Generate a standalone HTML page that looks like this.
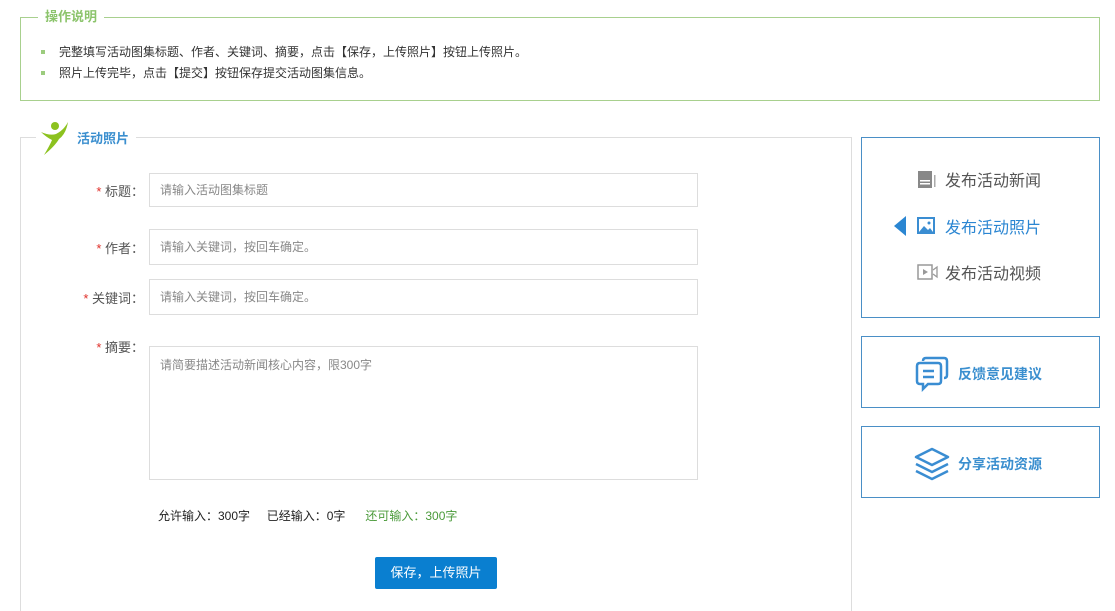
<!DOCTYPE html>
<html style="overflow:hidden;height:611px"><head><meta charset="utf-8"><style>
body{margin:0;width:1115px;height:611px;overflow:hidden;background:#fff;font-family:"Liberation Sans","Noto Sans CJK SC",sans-serif;position:relative;color:#333}
.a{position:absolute}
.lbl{position:absolute;width:126px;left:18px;text-align:right;font-size:13px;color:#555}
.lbl b{color:#e0302a;font-weight:normal}
.inp{position:absolute;left:149px;width:549px;border:1px solid #ddd;font-size:12px;color:#888;box-sizing:border-box;padding-left:10px}
.rb{position:absolute;left:861px;width:239px;border:1px solid #4a8fc6;box-sizing:border-box}
.it{position:absolute;left:945px;font-size:16px;color:#555}
</style></head><body>
<div class="a" style="left:20px;top:17px;width:1080px;height:84px;border:1px solid #a8d08e;box-sizing:border-box"></div>
<div class="a" style="left:38px;top:8px;background:#fff;padding:0 7px;font-size:13px;font-weight:bold;color:#8cc46c;line-height:18px">操作说明</div>
<div class="a" style="left:41px;top:50px;width:4px;height:4px;background:#9ccc7e"></div>
<div class="a" style="left:41px;top:71px;width:4px;height:4px;background:#9ccc7e"></div>
<div class="a" style="left:59px;top:44px;font-size:12px;line-height:16px;color:#333">完整填写活动图集标题、作者、关键词、摘要，点击【保存，上传照片】按钮上传照片。</div>
<div class="a" style="left:59px;top:65px;font-size:12px;line-height:16px;color:#333">照片上传完毕，点击【提交】按钮保存提交活动图集信息。</div>

<div class="a" style="left:20px;top:137px;width:832px;height:480px;border:1px solid #ddd;box-sizing:border-box"></div>
<div class="a" style="left:36px;top:118px;width:100px;height:40px;background:#fff"></div>
<svg class="a" style="left:40px;top:120px" width="32" height="36" viewBox="0 0 32 36">
<circle cx="15" cy="6" r="4" fill="#8cc21f"/>
<path d="M1 12 Q10 16 16 14 Q24 10 28 2 Q26 14 19 19 Q15 26 4 35 Q10 25 12 20 Q6 17 1 12Z" fill="#8cc21f"/>
</svg>
<div class="a" style="left:77px;top:128px;font-size:13px;font-weight:bold;color:#3b8fcf">活动照片</div>

<div class="lbl" style="top:181px"><b>*</b> 标题：</div>
<div class="inp" style="top:173px;height:34px;line-height:32px">请输入活动图集标题</div>
<div class="lbl" style="top:238px"><b>*</b> 作者：</div>
<div class="inp" style="top:229px;height:36px;line-height:34px">请输入关键词，按回车确定。</div>
<div class="lbl" style="top:288px"><b>*</b> 关键词：</div>
<div class="inp" style="top:279px;height:36px;line-height:34px">请输入关键词，按回车确定。</div>
<div class="lbl" style="top:337px"><b>*</b> 摘要：</div>
<div class="inp" style="top:346px;height:134px;padding-top:10px;line-height:16px">请简要描述活动新闻核心内容，限300字</div>
<div class="a" style="left:158px;top:507px;font-size:12px;color:#222">允许输入：300字&nbsp;&nbsp;&nbsp;&nbsp; 已经输入：0字&nbsp;&nbsp;&nbsp;&nbsp;&nbsp; <span style="color:#4a9a3a">还可输入：300字</span></div>
<div class="a" style="left:375px;top:557px;width:122px;height:32px;background:#0a7fd0;border-radius:2px;color:#fff;font-size:13px;text-align:center;line-height:32px">保存，上传照片</div>

<div class="rb" style="top:137px;height:181px"></div>
<svg class="a" style="left:917px;top:171px" width="20" height="18"><rect x="1" y="0" width="14" height="17" fill="#888"/><rect x="3" y="9" width="10" height="1.5" fill="#fff"/><rect x="3" y="12" width="10" height="1.5" fill="#fff"/><rect x="17" y="4" width="1.5" height="12" fill="#aaa"/></svg>
<div class="it" style="top:167px">发布活动新闻</div>
<svg class="a" style="left:894px;top:216px" width="12" height="20"><path d="M12 0V20L0 10Z" fill="#2b86d2"/></svg>
<svg class="a" style="left:917px;top:217px" width="20" height="18"><rect x="1" y="1" width="16" height="15" fill="none" stroke="#3a8dd2" stroke-width="2"/><path d="M2 15L7 9L11 13L13 11L16 15Z" fill="#3a8dd2"/><circle cx="12" cy="6" r="1.5" fill="#3a8dd2"/></svg>
<div class="it" style="top:214px;color:#2b86d2">发布活动照片</div>
<svg class="a" style="left:917px;top:264px" width="22" height="16"><rect x="1" y="1" width="14" height="14" fill="none" stroke="#999" stroke-width="1.5"/><path d="M6 5V11L11 8Z" fill="#999"/><path d="M16 6L20 3V13L16 10" fill="none" stroke="#999" stroke-width="1.3"/></svg>
<div class="it" style="top:260px">发布活动视频</div>

<div class="rb" style="top:336px;height:72px"></div>
<svg class="a" style="left:914px;top:356px" width="36" height="36" viewBox="0 0 36 36" fill="none" stroke="#3a8dd2" stroke-width="2.5"><path d="M9 5Q9 2 12 2H30Q33 2 33 5V19Q33 22 30 22"/><path d="M3 10Q3 7 6 7H24Q27 7 27 10V25Q27 28 24 28H14L9 33V28H6Q3 28 3 25Z"/><path d="M9 15H20M9 21H20"/></svg>
<div class="a" style="left:958px;top:364px;font-size:14px;font-weight:bold;color:#3b8fcf">反馈意见建议</div>

<div class="rb" style="top:426px;height:72px"></div>
<svg class="a" style="left:914px;top:447px" width="36" height="34" viewBox="0 0 36 34" fill="none" stroke="#3a8dd2" stroke-width="2.5" stroke-linejoin="round"><path d="M18 2L34 10L18 18L2 10Z"/><path d="M2 17L18 25L34 17"/><path d="M2 24L18 32L34 24"/></svg>
<div class="a" style="left:958px;top:454px;font-size:14px;font-weight:bold;color:#3b8fcf">分享活动资源</div>
</body></html>
